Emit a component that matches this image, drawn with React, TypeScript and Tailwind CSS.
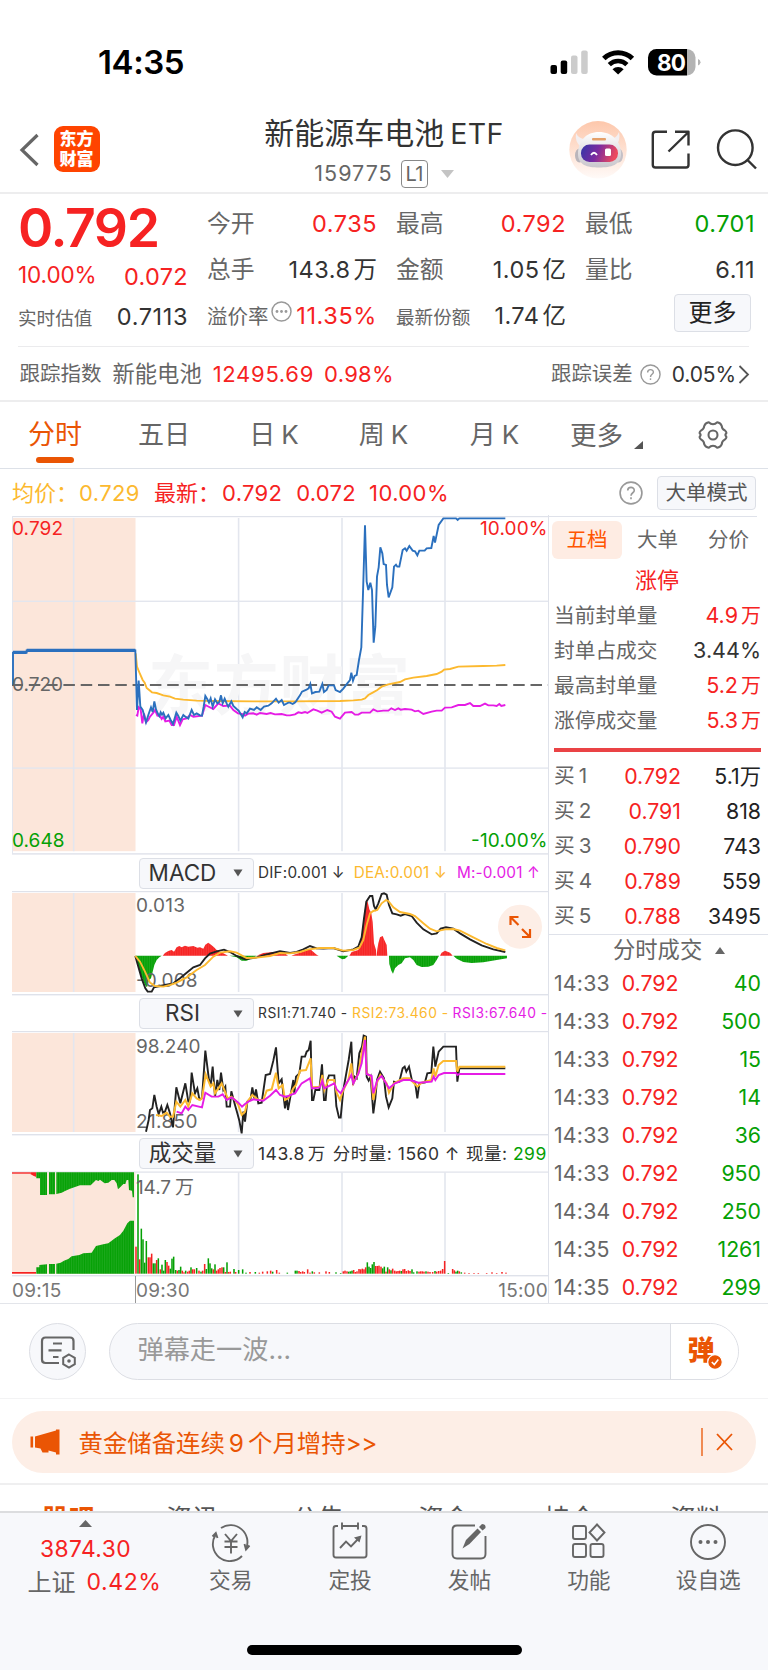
import React from "react";

type Bar = [number, number, "r" | "g"];

const RED = "#f62222";
const GREEN = "#04a004";
const ORANGE = "#ea5504";
const BLUE = "#2b70be";
const YELLOW = "#fcb92f";
const PINK = "#e51ce5";
const INK = "#222222";
const GRID = "#e3e6ee";

/* Chart series are sampled on a grid of one third of a pixel. The second half of each
   series starts at x = 870 on that grid. */
function join(left: string, right = ""): string {
  const shifted = right
    .split(" ")
    .filter(Boolean)
    .map((p) => {
      const [x, y] = p.split(",").map(Number);
      return `${x + 870},${y}`;
    });
  return [...left.split(" ").filter(Boolean), ...shifted].join(" ");
}

const price = join(
  "39,524 39,428 80,428 80,421 406,421 411,600 416,512 421,590 428,600 438,637 446,612 453,592 458,606 463,574 468,598 473,610 478,618 482,607 486,614 490,608 497,625 505,615 512,630 519,642 529,608 535,618 541,632 550,615 556,620 565,626 575,600 582,615 590,610 600,616 606,617 611,590 616,558 622,568 627,578 632,565 638,590 645,568 652,580 658,576 663,556 668,580 674,566 680,580 685,590 694,574 700,588 710,597 716,602 722,612 728,622 734,606 740,610 750,596 762,600 770,592 782,600 792,590 805,587 815,580 828,566 836,578 845,570 852,585 865,578",
  "0,578 8,582 14,578 18,574 30,556 36,545 48,540 56,535 61,522 66,550 76,546 88,545 97,522 102,546 110,540 116,526 132,526 137,540 150,546 160,536 172,520 180,510 184,488 189,512 194,498 200,495 207,450 214,412 219,250 225,46 230,215 235,240 241,218 246,240 251,398 256,350 261,200 266,172 271,112 277,130 281,162 288,165 291,225 296,262 307,232 312,170 318,164 322,170 328,170 338,120 345,115 350,122 358,108 368,122 375,124 382,136 388,122 404,122 410,115 424,114 431,78 435,98 446,45 460,25 498,25 503,30 508,25 646,25"
);
const average = join(
  "407,430 411,470 420,492 428,510 434,518 440,534 456,547 470,549 490,556 510,560 525,566 550,569 590,572 640,573 760,574 870,574",
  "0,574 150,573 190,571 215,569 225,565 235,555 248,548 262,540 275,530 295,523 330,516 345,508 370,503 410,498 440,492 455,485 462,479 480,477 505,470 580,468 620,467 646,465"
);
const index = join(
  "408,615 412,617 416,592 422,598 427,640 432,610 438,637 445,630 450,620 460,608 465,600 472,617 480,618 485,627 490,620 496,634 508,632 515,645 522,645 530,620 540,645 548,628 560,625 570,615 580,620 606,617 616,585 640,597 655,580 670,588 690,587 700,600 714,610 726,612 735,617 745,611 760,610 770,614 780,609 800,612 812,609 825,613 845,612 860,616",
  "0,616 15,613 25,607 35,609 45,606 52,609 70,598 82,602 95,608 112,600 125,605 135,620 150,626 165,608 185,606 195,614 205,614 215,608 240,608 250,598 262,604 280,602 295,602 304,595 315,600 325,595 332,599 345,597 365,599 375,604 385,602 400,612 425,605 440,602 455,602 465,593 485,592 505,585 525,585 540,579 550,588 570,588 585,581 595,586 610,586 620,588 628,582 634,588 646,585"
);

const dif = join(
  "406,318 415,350 425,385 436,415 443,425 455,425 462,412 480,408 495,405 520,400 540,385 560,368 580,352 600,345 615,325 630,311 650,304 672,299 690,306 710,318 735,328 770,322 800,313 840,304",
  "0,309 20,306 40,298 60,288 80,295 100,296 130,294 160,304 190,298 205,290 215,262 222,205 229,155 240,138 247,138 252,168 257,178 265,160 275,132 282,130 290,134 297,165 307,190 320,193 332,197 345,192 365,198 380,218 400,238 425,253 440,250 452,236 468,232 490,236 510,250 540,268 575,286 610,298 646,306"
);
const dea = join(
  "406,318 420,335 435,365 450,398 465,408 490,410 510,405 530,398 560,382 590,360 615,345 640,320 660,308 690,304 710,308 740,324 770,323 810,318 840,309",
  "0,310 30,306 55,298 90,294 130,294 160,302 190,300 208,293 220,270 230,225 240,190 250,183 262,180 275,160 288,150 295,153 310,172 330,186 360,192 375,198 400,220 420,236 440,244 465,238 490,237 510,242 550,262 590,282 620,294 646,301"
);
const macdGreen = [
  join("406,317 412,330 415,350 425,380 435,405 441,412 447,390 453,385 458,365 463,345 470,330 478,322 485,317"),
  join("688,317 710,322 725,332 740,332 755,325 770,317"),
  join("", "140,317 150,324 157,328 165,326 175,317"),
  join("", "297,317 298,342 304,362 309,371 315,355 325,345 335,340 345,325 360,322 370,330 380,345 395,351 415,350 430,345 440,330 447,317"),
  join("", "490,317 500,326 520,336 545,339 580,337 620,330 651,325 651,317"),
];
const macdRed = [
  join("488,317 495,309 505,303 515,300 522,305 530,292 538,288 545,292 555,287 565,290 580,288 592,293 600,292 610,296 616,284 625,278 633,284 642,292 650,300 660,305 670,310 684,317"),
  join("770,317 790,309 820,306 850,307 864,317"),
  join("", "4,317 20,311 30,308 60,297 80,314 86,317"),
  join("", "178,317 185,306 195,303 205,300 210,285 216,250 222,200 228,152 233,155 238,178 244,190 248,216 252,280 258,300 259,317"),
  join("", "260,317 262,298 265,280 270,262 278,258 283,270 290,285 292,317"),
  join("", "450,317 455,308 465,302 480,308 488,317"),
];

const rsi1 = join(
  "438,845 446,810 450,780 457,775 463,735 470,770 476,792 484,770 489,788 495,785 502,765 510,790 519,832 529,712 541,760 556,700 565,755 570,755 575,668 585,730 592,715 598,747 606,745 616,602 627,690 632,705 638,650 645,740 652,690 658,720 663,668 670,720 676,710 680,770 690,770 694,724 705,765 712,790 718,812 725,850 730,785 735,815 742,755 752,745 757,712 763,745 768,718 775,760 785,758 797,675 810,672 820,632 828,592 836,700 845,688 855,775 860,740 864,780",
  "2,735 10,690 13,730 18,680 28,670 35,620 45,620 50,605 56,600 62,572 66,750 70,750 76,720 88,720 96,643 102,750 107,750 112,690 117,676 133,676 139,768 147,803 152,803 160,720 168,675 176,630 184,575 189,705 194,680 200,685 208,610 216,590 221,557 228,560 230,680 236,692 242,680 250,790 256,745 261,690 270,665 282,685 288,740 296,772 307,745 312,695 320,697 328,695 338,655 344,650 349,665 357,650 366,692 375,695 382,745 388,700 405,697 412,670 424,668 430,590 436,650 446,605 460,590 498,590 502,695 508,655 646,655"
);
const rsi2 = join(
  "468,795 485,798 500,788 510,800 519,800 529,755 541,770 556,750 565,770 577,730 590,745 600,750 606,745 617,673 632,710 640,700 645,730 655,715 665,700 675,725 683,745 694,740 705,750 715,765 725,795 735,785 742,755 757,735 775,750 790,750 800,722 815,718 828,668 836,715 848,705 855,750 865,745",
  "0,735 10,715 18,705 30,662 48,660 62,625 66,712 90,710 97,675 103,720 115,690 132,690 140,728 150,750 158,725 175,690 184,640 190,700 205,670 215,610 225,560 230,670 243,680 250,750 260,700 271,675 290,700 297,728 312,700 340,685 358,685 382,710 395,698 424,690 431,655 436,680 446,645 460,633 498,633 502,665 508,650 646,650"
);
const rsi3 = join(
  "530,785 545,790 556,770 565,780 577,765 606,772 616,728 635,740 655,740 668,733 680,750 695,742 705,750 715,758 726,770 735,762 745,755 760,748 790,752 810,737 828,720 840,735 855,740 865,738",
  "0,735 15,730 35,700 60,685 66,715 90,712 97,692 103,715 133,700 140,718 152,730 165,708 184,675 190,700 205,672 215,640 225,570 230,672 245,678 250,730 262,690 275,678 297,715 315,700 340,690 360,690 385,698 425,695 431,680 436,690 446,675 462,669 498,669 502,675 508,672 646,672"
);

const auctionTop =
  "109,967 109,985 120,985 120,1035 141,1035 141,967 147,967 147,1033 165,1033 165,967 169,967 169,1032 185,1028 195,1023 210,1016 225,1011 240,1006 272,1006 288,990 295,993 300,989 308,995 314,1000 325,998 335,990 343,990 350,1000 354,1018 362,1010 370,1002 376,1002 380,990 385,990 387,1020 396,1022 398,1042 402,1042 402,967";
const auctionBottom =
  "109,1271 109,1252 118,1252 118,1245 141,1243 141,1271 147,1271 147,1242 165,1242 165,1271 169,1271 169,1241 182,1238 192,1232 205,1227 215,1219 238,1215 250,1210 275,1208 288,1188 310,1183 325,1180 345,1165 360,1155 370,1142 382,1120 390,1112 402,1112 402,1271";

const early: Bar[] = [
  [408, 1190, "r"], [414, 973, "g"], [419, 1228, "r"], [424, 1136, "g"], [429, 1168, "g"], [434, 1238, "g"],
  [439, 1173, "g"], [445, 1222, "r"], [450, 1222, "r"], [455, 1211, "r"], [460, 1240, "g"], [465, 1240, "g"],
  [470, 1230, "r"], [475, 1225, "g"], [481, 1258, "r"], [486, 1244, "g"], [491, 1262, "g"], [496, 1230, "g"],
  [501, 1236, "r"], [506, 1247, "r"], [511, 1256, "g"], [516, 1226, "g"], [521, 1220, "g"], [527, 1260, "g"],
  [532, 1262, "r"], [537, 1260, "g"], [542, 1250, "g"], [547, 1262, "r"], [552, 1267, "r"], [557, 1262, "g"],
  [563, 1265, "r"], [568, 1262, "r"], [573, 1252, "g"], [578, 1258, "r"], [583, 1258, "r"], [590, 1254, "g"],
  [597, 1262, "r"], [603, 1265, "g"], [608, 1262, "r"], [614, 1242, "r"], [619, 1257, "g"], [625, 1225, "g"],
  [630, 1240, "g"], [635, 1255, "g"], [640, 1258, "r"], [645, 1243, "g"], [650, 1262, "r"], [655, 1258, "r"],
  [660, 1254, "r"], [666, 1252, "r"], [671, 1252, "g"], [676, 1266, "r"], [681, 1237, "g"], [686, 1266, "r"],
  [691, 1265, "r"], [702, 1257, "g"], [707, 1266, "r"], [716, 1260, "g"], [728, 1258, "g"], [738, 1268, "g"],
  [750, 1266, "r"], [766, 1266, "g"], [778, 1268, "r"], [788, 1265, "r"], [802, 1264, "r"], [812, 1262, "r"],
  [818, 1265, "g"], [830, 1260, "r"], [838, 1268, "r"], [862, 1268, "g"],
];
const late: Bar[] = [
  [16, 1262, "g"], [21, 1262, "g"], [27, 1263, "r"], [32, 1266, "r"], [38, 1264, "r"], [43, 1266, "r"],
  [53, 1258, "r"], [60, 1268, "r"], [67, 1264, "g"], [73, 1267, "r"], [88, 1267, "r"], [108, 1264, "r"],
  [118, 1266, "r"], [138, 1267, "g"], [152, 1269, "g"], [160, 1264, "r"], [165, 1262, "r"], [171, 1264, "r"],
  [176, 1265, "g"], [181, 1264, "g"], [186, 1262, "g"], [191, 1260, "r"], [196, 1266, "r"], [201, 1264, "r"],
  [207, 1257, "r"], [212, 1258, "r"], [217, 1256, "r"], [222, 1258, "r"], [227, 1252, "r"], [232, 1237, "g"],
  [237, 1250, "g"], [242, 1254, "g"], [247, 1243, "g"], [252, 1236, "g"], [257, 1248, "r"], [262, 1248, "r"],
  [267, 1247, "r"], [273, 1250, "r"], [278, 1255, "g"], [283, 1250, "g"], [288, 1265, "r"], [293, 1252, "g"],
  [298, 1258, "r"], [303, 1261, "g"], [308, 1256, "r"], [314, 1262, "r"], [319, 1264, "r"], [324, 1263, "r"],
  [329, 1262, "r"], [334, 1263, "g"], [339, 1258, "r"], [344, 1257, "r"], [349, 1263, "r"], [355, 1261, "r"],
  [360, 1263, "r"], [366, 1258, "g"], [371, 1267, "g"], [381, 1264, "g"], [387, 1265, "r"], [392, 1264, "r"],
  [397, 1264, "r"], [402, 1265, "r"], [408, 1264, "g"], [414, 1265, "r"], [420, 1266, "r"], [428, 1266, "r"],
  [435, 1263, "g"], [440, 1265, "r"], [446, 1263, "r"], [452, 1262, "r"], [458, 1257, "r"], [464, 1233, "r"],
  [475, 1269, "g"], [488, 1257, "r"], [493, 1261, "r"], [498, 1265, "g"], [503, 1262, "g"], [508, 1264, "r"],
  [514, 1267, "g"], [524, 1268, "r"], [537, 1269, "r"], [552, 1269, "r"], [565, 1269, "r"], [590, 1269, "r"],
  [606, 1267, "r"], [620, 1269, "r"], [636, 1266, "r"], [648, 1268, "r"],
];
const volume: Bar[] = [...early, ...late.map(([x, y, c]): Bar => [x + 870, y, c])];

function Line({ points, color, width = 5.7 }: { points: string; color: string; width?: number }) {
  return <polyline points={points} fill="none" stroke={color} strokeWidth={width} strokeLinejoin="miter" />;
}

function Frame({ top, bottom, inner = 2 }: { top: number; bottom: number; inner?: number }) {
  return (
    <>
      <rect x="12" y={top + inner} width="123.5" height={bottom - top - inner * 2} fill="#fce6da" />
      {[73.7, 238.6, 342, 445].map((x) => (
        <rect key={x} x={x - 0.8} y={top + inner} width="1.6" height={bottom - top - inner * 2} fill={GRID} />
      ))}
      <rect x="12" y={top} width="537" height="1.2" fill="#dfe2ea" />
      <rect x="12" y={bottom} width="537" height="1.4" fill="#dfe2ea" />
    </>
  );
}

function Label({ x, y, w, fill = "#666", end = false, children }: { x: number; y: number; w: number; fill?: string; end?: boolean; children: React.ReactNode }) {
  return (
    <text x={x} y={y} fill={fill} fontSize="19" textLength={w} textAnchor={end ? "end" : "start"}>
      {children}
    </text>
  );
}

function PriceChart() {
  return (
    <svg className="block" width="549" height="340" viewBox="0 515 549 340">
      <Frame top={516} bottom={853.2} />
      <text x="148" y="709" fontSize="65" fontWeight="700" fill="#f6f6f7" textLength="262">东方财富</text>
      <rect x="12" y="516" width="1" height="338" fill={GRID} />
      <rect x="12" y="600.6" width="537" height="1.4" fill={GRID} />
      <rect x="12" y="767.4" width="537" height="1.4" fill={GRID} />
      <path d="M12 685H549" stroke="#666" strokeWidth="1.8" strokeDasharray="11.5 5.8" strokeDashoffset="0.5" />
      <g transform="translate(0 510) scale(0.33333)">
        <Line points={index} color={PINK} />
        <Line points={average} color={YELLOW} />
        <Line points={price} color={BLUE} />
        <path d="M39 427H80M80 421H406" stroke={BLUE} strokeWidth="10" />
      </g>
      <Label x={12} y={535} w={51} fill={RED}>0.792</Label>
      <Label x={12} y={690.5} w={51}>0.720</Label>
      <Label x={12} y={846.5} w={52.5} fill={GREEN}>0.648</Label>
      <Label x={547.5} y={535} w={67.5} fill={RED} end>10.00%</Label>
      <Label x={547.5} y={846.5} w={76.5} fill={GREEN} end>-10.00%</Label>
    </svg>
  );
}

function MacdChart() {
  return (
    <svg className="block" width="549" height="106" viewBox="0 891 549 106">
      <defs>
        <pattern id="stripes" width="5.2" height="10" patternUnits="userSpaceOnUse">
          <rect width="1" height="10" fill="#fff" opacity="0.25" />
        </pattern>
      </defs>
      <Frame top={891} bottom={994} />
      <g transform="translate(0 850) scale(0.33333)">
        {macdGreen.map((p) => <polygon key={p} points={p} fill={GREEN} />)}
        {macdRed.map((p) => <polygon key={p} points={p} fill={RED} />)}
        {[...macdGreen, ...macdRed].map((p) => <polygon key={p} points={p} fill="url(#stripes)" />)}
      </g>
      <Label x={136} y={912} w={49}>0.013</Label>
      <Label x={136} y={987} w={61.5}>-0.008</Label>
      <g transform="translate(0 850) scale(0.33333)">
        <Line points={dif} color={INK} />
        <Line points={dea} color={YELLOW} />
      </g>
      <circle cx="520" cy="926.7" r="22" fill="#fdeee6" />
      <g fill="none" stroke={ORANGE} strokeWidth="2.2">
        <path d="M510.5 925V917H518.5M510.5 917L518.5 925" />
        <path d="M530 929V937H522M530 937L522 929" />
      </g>
    </svg>
  );
}

function RsiChart() {
  return (
    <svg className="block" width="549" height="106" viewBox="0 1031 549 106">
      <Frame top={1031} bottom={1134} />
      <Label x={136} y={1053} w={64.5}>98.240</Label>
      <Label x={136} y={1127.5} w={61.5}>21.850</Label>
      <g transform="translate(0 850) scale(0.33333)">
        <Line points={rsi1} color={INK} />
        <Line points={rsi2} color={YELLOW} width={6} />
        <Line points={rsi3} color={PINK} />
      </g>
    </svg>
  );
}

function VolumeChart() {
  return (
    <svg className="block" width="549" height="106" viewBox="0 1171 549 106">
      <Frame top={1171.5} bottom={1275} inner={1} />
      <g transform="translate(0 850) scale(0.33333)">
        <rect x="36" y="967" width="55" height="4" fill={RED} />
        <path d="M91 967H109V981L100 977L91 972Z" fill={RED} />
        <rect x="36" y="1266" width="72" height="5" fill={RED} />
        <polygon points={auctionTop} fill={GREEN} />
        <polygon points={auctionBottom} fill={GREEN} />
        <polygon points={auctionTop} fill="url(#stripes)" />
        <polygon points={auctionBottom} fill="url(#stripes)" />
        {volume.map(([x, y, c]) => (
          <rect key={x} x={x - 2.3} y={y} width="4.6" height={1271 - y} fill={c === "r" ? RED : GREEN} />
        ))}
      </g>
      <Label x={136} y={1194} w={35}>14.7</Label>
      <Label x={175} y={1194} w={18}>万</Label>
    </svg>
  );
}

function Selector({ name }: { name: string }) {
  return (
    <div className="ml-[139px] flex h-[31px] w-[115px] shrink-0 items-center justify-between rounded-[4px] border border-[#dcdfe6] bg-[#f7f8fb] pr-[10px] text-[22.5px] tracking-normal text-[#333]">
      <span className="flex-1 pr-[8px] text-center">{name}</span>
      <svg width="10" height="8" viewBox="0 0 10 8"><path d="M0.5 0.5H9.5L5 7.5Z" fill="#555" /></svg>
    </div>
  );
}

function Q({ l, v, c = "text-[#333]", small, u }: { l: React.ReactNode; v: string; c?: string; small?: string; u?: string }) {
  return (
    <div className="flex h-full w-[170px] items-center justify-between whitespace-nowrap">
      <span className={`text-[#666] ${small ?? "text-[23.8px]"}`}>{l}</span>
      <span className={`text-[23.5px] tracking-[0.5px] ${c}`}>
        {v}
        {u && <span className="ml-[3px] tracking-normal">{u}</span>}
      </span>
    </div>
  );
}

function Help({ r = "size-[21px]" }: { r?: string }) {
  return (
    <svg className={r} viewBox="0 0 22 22" fill="none" stroke="#999" strokeWidth="1.5">
      <circle cx="11" cy="11" r="10" />
      <path d="M8 8.8C8 4.9 14 5 14 8.6C14 10.8 11 10.8 11 13.5" />
      <path d="M11 15V16.7" />
    </svg>
  );
}

function StatusBar() {
  return (
    <div className="flex h-[110px] items-start justify-between pt-[46px]">
      <div className="ml-[98px] h-[33px] text-[33px] leading-[33px] font-semibold tracking-[-0.4px] text-black">14:35</div>
      <svg className="mr-[64px]" width="154" height="32" viewBox="550 46 154 32">
        <rect x="550.5" y="65" width="6.5" height="9" rx="2" />
        <rect x="560.7" y="60.5" width="6.5" height="13.5" rx="2" />
        <rect x="571" y="55.5" width="6.5" height="18.5" rx="2" fill="#ccc" />
        <rect x="581.2" y="50.5" width="6.5" height="23.5" rx="2" fill="#ccc" />
        <g fill="none" stroke="#000" strokeWidth="5">
          <path d="M603.8 58.5A20.5 20.5 0 0 1 632.4 58.5" />
          <path d="M609.3 64.7A12.5 12.5 0 0 1 626.9 64.7" strokeWidth="4.5" />
        </g>
        <path d="M612.5 69.3A8 8 0 0 1 623.7 69.3L618.1 74.5Z" />
        <path d="M656.5 49H687V75.5H656.5A8.5 8.5 0 0 1 648 67V57.5A8.5 8.5 0 0 1 656.5 49Z" />
        <path d="M687 49A8.8 8.8 0 0 1 695.5 57.5V67A8.8 8.8 0 0 1 687 75.5Z" fill="#b3b3b3" />
        <path d="M698 59Q700.5 60 700.5 62.2Q700.5 64.5 698 65.5Z" fill="#b3b3b3" />
        <text x="657" y="70.5" fontSize="22.5" fontWeight="700" fill="#fff" textLength="29">80</text>
      </svg>
    </div>
  );
}

function Header() {
  return (
    <div className="flex h-[84px] items-start justify-between border-b-2 border-[#ededee]">
      <div className="flex w-[263px] pt-[16px] pl-[19px]">
        <svg className="mt-[7px]" width="21" height="34" viewBox="0 0 21 34"><path d="M18.5 2L3 17L18.5 32" fill="none" stroke="#666" strokeWidth="3.2" /></svg>
        <div className="ml-[13.5px] flex h-[46px] w-[46px] flex-col items-center justify-center rounded-[9px] bg-[#ff4400] text-[17px] leading-[20px] font-black text-white">
          <span>东方</span>
          <span>财富</span>
        </div>
      </div>
      <div className="flex flex-col items-center">
        <div className="mt-[6.5px] h-[32px] text-[30px] leading-[32px] whitespace-nowrap text-[#333]">
          新能源车电池<span className="ml-[6px] text-[28.5px] tracking-[0.4px]">ETF</span>
        </div>
        <div className="mt-[10.5px] flex h-[29px] items-center text-[21.5px] text-[#666]">
          <span className="tracking-[1px]">159775</span>
          <span className="ml-[8px] flex h-[28px] w-[27px] items-center justify-center rounded-[4px] border-[1.5px] border-[#888] text-[20px] tracking-[-0.5px]">L1</span>
          <svg className="ml-[13px]" width="13" height="8" viewBox="0 0 13 8"><path d="M0 0H13L6.5 8Z" fill="#c4c4c4" /></svg>
        </div>
      </div>
      <svg width="263" height="82" viewBox="505 110 263 82" fill="none">
        <defs>
          <linearGradient id="halo" x1="0" y1="0" x2="0" y2="1"><stop stopColor="#fdc7ab" /><stop offset="1" stopColor="#fffaf8" /></linearGradient>
          <linearGradient id="visor" x1="0" y1="0" x2="1" y2="0.2"><stop stopColor="#3337a8" /><stop offset="0.5" stopColor="#7a2aa0" /><stop offset="1" stopColor="#ec4a5e" /></linearGradient>
          <linearGradient id="shell" x1="0" y1="0" x2="0" y2="1"><stop stopColor="#ffffff" /><stop offset="1" stopColor="#c9c6cc" /></linearGradient>
        </defs>
        <circle cx="598" cy="149.7" r="28.7" fill="url(#halo)" />
        <ellipse cx="579.5" cy="155.5" rx="4.5" ry="7" fill="#b9b5bb" />
        <ellipse cx="618.5" cy="155.5" rx="4.5" ry="7" fill="#c4c0c6" />
        <path d="M576 133Q574.5 142 581 147L588 139Q579 140 576 133ZM619 132Q621 141 615 147L608 139Q616 140 619 132Z" fill="#f3eff1" />
        <path d="M599 132C612 132 621 141 621 154C621 165 611 167.5 599 167.5C587 167.5 578 165 578 154C578 141 586 132 599 132Z" fill="url(#shell)" />
        <rect x="581" y="144.5" width="37" height="17.5" rx="8.5" fill="url(#visor)" />
        <path d="M591 155Q594 150.5 597 155" stroke="#fff" strokeWidth="1.8" />
        <rect x="605" y="148.5" width="6" height="7.5" rx="1.5" fill="#fff" />
        <rect x="592" y="138" width="14" height="2.4" rx="1" fill="#e5a06a" />
        <g stroke="#333" strokeWidth="2.4" strokeLinejoin="round">
          <path d="M667 131.8H655.5Q652.8 131.8 652.8 134.5V165Q652.8 167.5 655.5 167.5H686Q688.5 167.5 688.5 165V153.5" />
          <path d="M675 131.8H688.5V145.5M688 132.5L668.5 151.5" />
          <circle cx="735.3" cy="147.7" r="17.3" />
          <path d="M747.5 160L756 168.5" />
        </g>
      </svg>
    </div>
  );
}

function Quote() {
  return (
    <div className="h-[208px] border-b-2 border-[#ededee] pr-[13px] pl-[18px]">
      <div className="flex h-[152px] pt-[6.5px]">
        <div className="w-[170px] flex-none whitespace-nowrap">
          <div className="h-[54px] text-[53.5px] leading-[53px] font-semibold tracking-[-1.4px] text-[#f62222]">0.792</div>
          <div className="flex h-[40px] items-center justify-between pt-[2px] text-[22.5px] text-[#f62222]">
            <span className="tracking-[-0.1px]">10.00%</span>
            <span className="pt-[2px] text-[23.5px] tracking-[0.3px]">0.072</span>
          </div>
          <div className="flex h-[44px] items-center justify-between">
            <span className="pt-[4px] text-[18.6px] text-[#666]">实时估值</span>
            <span className="text-[23.5px] tracking-[0.6px] text-[#333]">0.7113</span>
          </div>
        </div>
        <div className="ml-[19px] grid h-[138px] flex-none grid-cols-3 grid-rows-3 gap-x-[19px] text-[#333]">
          <Q l="今开" v="0.735" c="text-[#f62222]" />
          <Q l="最高" v="0.792" c="text-[#f62222]" />
          <Q l="最低" v="0.701" c="text-[#04a004]" />
          <Q l="总手" v="143.8" u="万" />
          <Q l="金额" v="1.05" u="亿" />
          <Q l="量比" v="6.11" />
          <div className="flex h-full w-[170px] items-center justify-between whitespace-nowrap">
            <span className="flex pt-[4px] text-[20.5px] text-[#666]">
              溢价率
              <svg className="-mt-[6px] ml-[2px]" width="21" height="21" viewBox="0 0 21 21">
                <circle cx="10.5" cy="10.5" r="9.5" fill="none" stroke="#999" strokeWidth="1.5" />
                <circle cx="6" cy="10.5" r="1.4" fill="#999" /><circle cx="10.5" cy="10.5" r="1.4" fill="#999" /><circle cx="15" cy="10.5" r="1.4" fill="#999" />
              </svg>
            </span>
            <span className="text-[23.5px] tracking-[0.6px] text-[#f62222]">11.35%</span>
          </div>
          <Q l={<span className="block pt-[4px]">最新份额</span>} v="1.74" u="亿" small="text-[18.6px]" />
          <div className="flex h-full items-center justify-end pr-[4px]">
            <div className="-mt-[5px] flex h-[38px] w-[77px] items-center justify-center rounded-[4px] border border-[#dcdfe6] bg-[#f7f8fb] text-[24px] text-[#222]">更多</div>
          </div>
        </div>
      </div>
      <div className="mr-[6px] h-px bg-[#ebebed]" />
      <div className="mr-[5px] flex h-[53px] items-center pt-[1px] whitespace-nowrap text-[#666]">
        <span className="ml-[1.5px] text-[20.5px]">跟踪指数</span>
        <span className="ml-[11px] text-[22.3px]">新能电池</span>
        <span className="ml-[11px] text-[22px] tracking-[0.7px] text-[#f62222]">12495.69</span>
        <span className="ml-[10px] text-[22px] tracking-[0.3px] text-[#f62222]">0.98%</span>
        <span className="ml-auto text-[20.4px]">跟踪误差</span>
        <Help r="ml-[7px] size-[21px]" />
        <span className="ml-[11px] text-[21px] tracking-[-0.1px] text-[#333]">0.05%</span>
        <svg className="ml-[2px]" width="12" height="19" viewBox="0 0 12 19"><path d="M1.5 1L10 9.5L1.5 18" fill="none" stroke="#555" strokeWidth="1.8" /></svg>
      </div>
    </div>
  );
}

function Tabs() {
  const tabs = [
    { t: "日", w: "w-[112px]" },
    { t: "周", w: "w-[107px]" },
    { t: "月", w: "w-[115px]" },
  ];
  return (
    <div className="flex h-[67px] border-b-[1.5px] border-[#dde1e8] pt-[10px] text-[26px] leading-[46px] text-[#666]">
      <div className="flex w-[110px] flex-col items-center text-[27px] text-[#ea5504]">
        <span>分时</span>
        <span className="-mt-[1px] h-[6px] w-[38px] rounded-full bg-[#ea5504]" />
      </div>
      <div className="w-[108px] text-center">五日</div>
      {tabs.map((x) => (
        <div key={x.t} className={`${x.w} flex justify-center`}>
          {x.t}<span className="ml-[6px]">K</span>
        </div>
      ))}
      <div className="ml-[18px] flex text-[26.5px]">
        更多
        <svg className="mt-[29px] ml-[11px]" width="9" height="8" viewBox="0 0 9 8"><path d="M9 0V8H0Z" fill="#555" /></svg>
      </div>
      <svg className="mt-[8px] ml-[55px]" width="30" height="30" viewBox="0 0 32 32" fill="none" stroke="#666" strokeWidth="2.2" strokeLinejoin="round">
        <path d="M11.5 2.5Q13.5 4.5 16 4.5Q18.5 4.5 20.5 2.5Q24 3 25.3 6.2Q25.5 10 28.5 11Q31 13 30 14.5Q28.5 16 30 17.500Q31 19 28.5 21Q25.500 22.5 25.3 26Q24 29 20.5 29.5Q18.5 27.5 16 27.5Q13.5 27.5 11.5 29.5Q8 29 6.7 26Q6.500 22.5 3.5 21Q1 19 2 17.5Q3.500 16 2 14.5Q1 13 3.5 11Q6.5 9.5 6.7 6.2Q8 3 11.5 2.5Z" />
        <circle cx="16" cy="16" r="4.8" />
      </svg>
    </div>
  );
}

function InfoRow() {
  return (
    <div className="flex h-[46px] items-center pt-[2px] pl-[12px] text-[22px] whitespace-nowrap">
      <span className="flex w-[142px] items-center text-[#fcb92f]">均价：<span className="ml-[1px] tracking-[0.4px]">0.729</span></span>
      <span className="flex items-center text-[#f62222]">最新：<span className="ml-[2px] tracking-[0.3px]">0.792</span><span className="ml-[14px] tracking-[0.3px]">0.072</span><span className="ml-[13px] tracking-[0.4px]">10.00%</span></span>
      <span className="mr-[14px] ml-auto"><Help r="size-[24px]" /></span>
      <span className="mr-[12px] flex h-[34px] w-[99px] items-center justify-center rounded-[4px] border border-[#dcdfe6] bg-[#f7f8fb] text-[20.5px] text-[#555]">大单模式</span>
    </div>
  );
}

function OrderBook() {
  const summary = [
    ["当前封单量", "4.9", "万", "text-[#f62222]"],
    ["封单占成交", "3.44%", "", "text-[#333]"],
    ["最高封单量", "5.2", "万", "text-[#f62222]"],
    ["涨停成交量", "5.3", "万", "text-[#f62222]"],
  ];
  const bids = [["1", "0.792", "5.1万"], ["2", "0.791", "818"], ["3", "0.790", "743"], ["4", "0.789", "559"], ["5", "0.788", "3495"]];
  const ticks = [["14:33", "40"], ["14:33", "500"], ["14:33", "15"], ["14:33", "14"], ["14:33", "36"], ["14:33", "950"], ["14:34", "250"], ["14:35", "1261"], ["14:35", "299"]];
  return (
    <div className="h-[788px] flex-1 border-l border-[#dfe2ea] text-[#666]">
      <div className="mt-px mr-[11px] h-px bg-[#dfe2ea]" />
      <div className="mt-[4px] flex h-[38px] items-center pl-[3px] text-[20.5px]">
        <span className="flex h-[38px] w-[70px] items-center justify-center rounded-[6px] bg-[#feece3] text-[#ff5500]">五档</span>
        <span className="w-[71px] text-center">大单</span>
        <span className="w-[71px] text-center">分价</span>
      </div>
      <div className="h-[39.5px] pt-[5px] pr-[3px] text-center text-[22px] leading-[33px] text-[#f62222]">涨停</div>
      <div className="pr-[7px] pl-[5px] text-[20.7px]">
        {summary.map(([l, v, u, c]) => (
          <div key={l} className="flex h-[35px] items-center justify-between">
            <span>{l}</span>
            <span className={`text-[21.5px] ${c}`}>{v}{u && <span className="ml-[3px] text-[20px]">{u}</span>}</span>
          </div>
        ))}
        <div className="mt-[9.5px] mb-[7px] h-[4px] bg-[#ea4345]" />
        {bids.map(([n, p, v]) => (
          <div key={n} className="flex h-[35px] items-center">
            <span className="w-[51px]">买<span className="ml-[4px]">{n}</span></span>
            <span className="w-[76px] text-right text-[21.3px] text-[#f62222]">{p}</span>
            <span className="flex-1 text-right text-[21.3px] text-[#222]">{v}</span>
          </div>
        ))}
      </div>
      <div className="flex h-[31px] items-center border-t border-[#dfe2ea] pl-[64px] text-[22.3px]">
        分时成交
        <svg className="ml-[13px]" width="10" height="7" viewBox="0 0 10 7"><path d="M5 0L10 7H0Z" fill="#666" /></svg>
      </div>
      <div className="pr-[7px] pl-[5px] text-[21.3px]">
        {ticks.map(([t, v], i) => (
          <div key={i} className="flex h-[37.93px] items-center">
            <span className="w-[55px] tracking-[0.2px]">{t}</span>
            <span className="w-[69.5px] text-right text-[#f62222]">0.792</span>
            <span className="flex-1 text-right text-[#04a004]">{v}</span>
          </div>
        ))}
      </div>
    </div>
  );
}

function Charts() {
  return (
    <div className="flex h-[789px] border-b-[1.5px] border-[#e3e5ea]">
      <div className="w-[548px] shrink-0 overflow-hidden whitespace-nowrap">
        <PriceChart />
        <div className="flex h-[36px] items-center text-[15.3px] tracking-[0.2px] text-[#333]">
          <Selector name="MACD" />
          <span className="ml-[4px]">DIF:0.001 ↓</span>
          <span className="ml-[9px] text-[#fcb92f]">DEA:0.001 ↓</span>
          <span className="ml-[10px] text-[#e51ce5]">M:-0.001 ↑</span>
        </div>
        <div className="h-[104px]"><MacdChart /></div>
        <div className="flex h-[36px] items-center pt-[1px] text-[13.8px] tracking-[0.5px] text-[#333]">
          <Selector name="RSI" />
          <span className="ml-[4px]">RSI1:71.740 -</span>
          <span className="ml-[4.5px] text-[#fcb92f]">RSI2:73.460 -</span>
          <span className="ml-[4px] text-[#e51ce5]">RSI3:67.640 -</span>
        </div>
        <div className="h-[104px]"><RsiChart /></div>
        <div className="flex h-[36px] items-center pt-[1px] text-[17.5px] tracking-[0.5px] text-[#333]">
          <Selector name="成交量" />
          <span className="ml-[4px]">143.8<span className="ml-[3px]">万</span></span>
          <span className="ml-[7px]">分时量: 1560 ↑</span>
          <span className="ml-[6px]">现量: <span className="text-[#04a004]">299</span></span>
        </div>
        <div className="h-[105px]"><VolumeChart /></div>
        <div className="flex h-[27px] items-center pl-[12px] text-[19px] tracking-[0.2px] text-[#777]">
          <span className="w-[123px] pt-[2px]">09:15</span>
          <span className="flex h-full items-center border-l border-[#999] pt-[2px]">09:30</span>
          <span className="ml-auto pt-[2px]">15:00</span>
        </div>
      </div>
      <OrderBook />
    </div>
  );
}

function CommentBar() {
  return (
    <div className="flex h-[95px] items-start border-b border-[#f3f3f4] pt-[19px] pl-[29px]">
      <div className="flex h-[57px] w-[57px] items-center justify-center rounded-full border border-[#dcdee4] bg-[#f7f8fb]">
        <svg width="36" height="34" viewBox="40 1335 36 34" fill="none" stroke="#666" strokeWidth="2.2">
          <path d="M73.5 1350V1341Q73.5 1337.5 70 1337.5H45.5Q42 1337.5 42 1341V1359.5Q42 1363 45.5 1363H59" />
          <path d="M53 1343.5H62M48.5 1350.3H61.5M53 1357H58.5" />
          <path d="M69 1354.5L74.8 1357.8V1364.2L69 1367.5L63.2 1364.2V1357.8Z" strokeWidth="2" />
          <circle cx="69" cy="1361" r="1.8" fill="#666" stroke="none" />
        </svg>
      </div>
      <div className="ml-[23px] flex h-[57px] w-[630px] overflow-hidden rounded-full border border-[#dcdee4] bg-[#f7f8fb]">
        <div className="w-[561px] border-r border-[#dcdee4] pl-[27.5px] text-[26.2px] leading-[51px] text-[#999]">弹幕走一波...</div>
        <div className="relative flex-1 bg-white">
          <span className="absolute top-[13px] left-[16.5px] text-[27px] leading-[28px] font-black text-[#ea5504]">弹</span>
          <svg className="absolute top-[30px] left-[36px]" width="16" height="16" viewBox="0 0 16 16">
            <circle cx="8" cy="8" r="7.3" fill="#ea5504" stroke="#fff" strokeWidth="1.2" />
            <path d="M4.8 8L7.3 10.5L11.3 5.5" fill="none" stroke="#fff" strokeWidth="1.6" />
          </svg>
        </div>
      </div>
    </div>
  );
}

function Banner() {
  return (
    <div className="h-[86px] border-b-2 border-[#efeff0] px-[12px] pt-[12px]">
      <div className="flex h-[62px] items-center rounded-[31px] bg-[#fdeee6] pl-[18px] text-[#ea5504]">
        <svg width="30" height="26" viewBox="0 0 30 26" fill="#ea5504">
          <rect x="0.5" y="7.5" width="2.6" height="11" />
          <path d="M5 7.5L26 1.500V0.5H29.5V25.5H26V23.5L18.5 21.5V23.5H12.5L10.5 19.5L5 18.5Z" />
        </svg>
        <span className="ml-[18.500px] pt-[1.5px] text-[24.4px]">黄金储备连续<span className="mx-[4px]">9</span>个月增持<span className="tracking-[-0.5px]">&gt;&gt;</span></span>
        <svg className="mr-[23px] ml-auto" width="32" height="28" viewBox="0 0 32 28" fill="none" stroke="#ea5504">
          <path d="M1 0V28" strokeWidth="1.3" />
          <path d="M16 6L31 22M31 6L16 22" strokeWidth="1.8" />
        </svg>
      </div>
    </div>
  );
}

function SubTabs() {
  return (
    <div className="flex h-[26px] overflow-hidden pt-[17px] pl-[8px] text-[26px] leading-[34px] text-[#555]">
      <span className="w-[121px] text-center font-bold text-[#ea5504]">股吧</span>
      {["资讯", "公告", "资金", "持仓", "资料"].map((t) => (
        <span key={t} className="w-[126px] text-center">{t}</span>
      ))}
    </div>
  );
}

const navIcons: { name: string; icon: React.ReactNode }[] = [
  {
    name: "交易",
    icon: (
      <>
        <path d="M10 6A17 17 0 0 1 35 27M38.5 23.500L35 27.5L33.500 22" />
        <path d="M4.5 13A17 17 0 0 0 31 34M1.5 14.5L4.8 11L6.5 16" />
        <path d="M14 12L20 19L26 12M13.5 19.500H26.500M13.5 25H26.5M20 19V31.5" />
      </>
    ),
  },
  {
    name: "定投",
    icon: (
      <>
        <path d="M8 4H6Q3.5 4 3.5 6.5V33Q3.5 35.5 6 35.5H34Q36.5 35.5 36.5 33V6.5Q36.5 4 34 4H32" />
        <path d="M12 4H28M12 0.5V7.5M28 0.5V7.5" />
        <path d="M10 26L16 19.5L21 24.5L30 15" />
        <path d="M31.5 13.5L24 15.5L29.5 20.5Z" fill="#666" stroke="none" />
      </>
    ),
  },
  {
    name: "发帖",
    icon: (
      <>
        <path d="M26 3.5H8Q3.5 3.5 3.5 8V32Q3.5 36.5 8 36.5H32Q36.5 36.5 36.5 32V14" />
        <path d="M13.5 26.5L17 18L28.5 6.5L32 10L20.5 22Z" fill="#666" stroke="none" />
        <path d="M30 5L33 2Q37 2 36.5 6L33.5 8.5Z" fill="#666" stroke="none" />
      </>
    ),
  },
  {
    name: "功能",
    icon: (
      <>
        <rect x="4" y="4" width="13" height="13" rx="2" />
        <path d="M28 2.5L35.5 10.5L28 18.5L20.5 10.5Z" />
        <rect x="4" y="22" width="13" height="13" rx="2" />
        <rect x="21.5" y="22" width="13" height="13" rx="2" />
      </>
    ),
  },
  {
    name: "设自选",
    icon: (
      <>
        <circle cx="20" cy="20" r="17" />
        <circle cx="12.5" cy="20" r="2" fill="#666" stroke="none" />
        <circle cx="20" cy="20" r="2" fill="#666" stroke="none" />
        <circle cx="27.5" cy="20" r="2" fill="#666" stroke="none" />
      </>
    ),
  },
];

function BottomBar() {
  return (
    <div className="flex h-[160px] flex-col border-t-2 border-[#dcdddf] bg-[#f7f8fb] whitespace-nowrap">
      <div className="flex h-[132px]">
        <div className="flex w-[171px] flex-col items-center text-[#666]">
          <svg className="mt-[7px]" width="13" height="7" viewBox="0 0 13 7"><path d="M6.5 0L13 7H0Z" fill="#666" /></svg>
          <div className="mt-[6px] h-[31px] text-[22.8px] leading-[31px] tracking-[0.4px] text-[#f62222]">3874.30</div>
          <div className="mt-[3px] flex h-[31px] items-center pl-[18px] text-[24px]">
            上证<span className="ml-[11px] text-[23px] tracking-[0.6px] text-[#f62222]">0.42%</span>
          </div>
        </div>
        {navIcons.map(({ name, icon }) => (
          <div key={name} className="flex w-[119.4px] flex-col items-center pt-[9px] text-[21.7px] leading-[30px] text-[#666]">
            <svg width="40" height="40" viewBox="0 0 40 40" fill="none" stroke="#666" strokeWidth="1.9">{icon}</svg>
            <span className="mt-[3px]">{name}</span>
          </div>
        ))}
      </div>
      <div className="mx-auto h-[10px] w-[275px] rounded-full bg-black" />
    </div>
  );
}

export default function App() {
  return (
    <div className="h-[1670px] w-[768px] overflow-hidden bg-white font-['Inter','Noto_Sans_CJK_SC',sans-serif] leading-none">
      <StatusBar />
      <Header />
      <Quote />
      <Tabs />
      <InfoRow />
      <Charts />
      <CommentBar />
      <Banner />
      <SubTabs />
      <BottomBar />
    </div>
  );
}
